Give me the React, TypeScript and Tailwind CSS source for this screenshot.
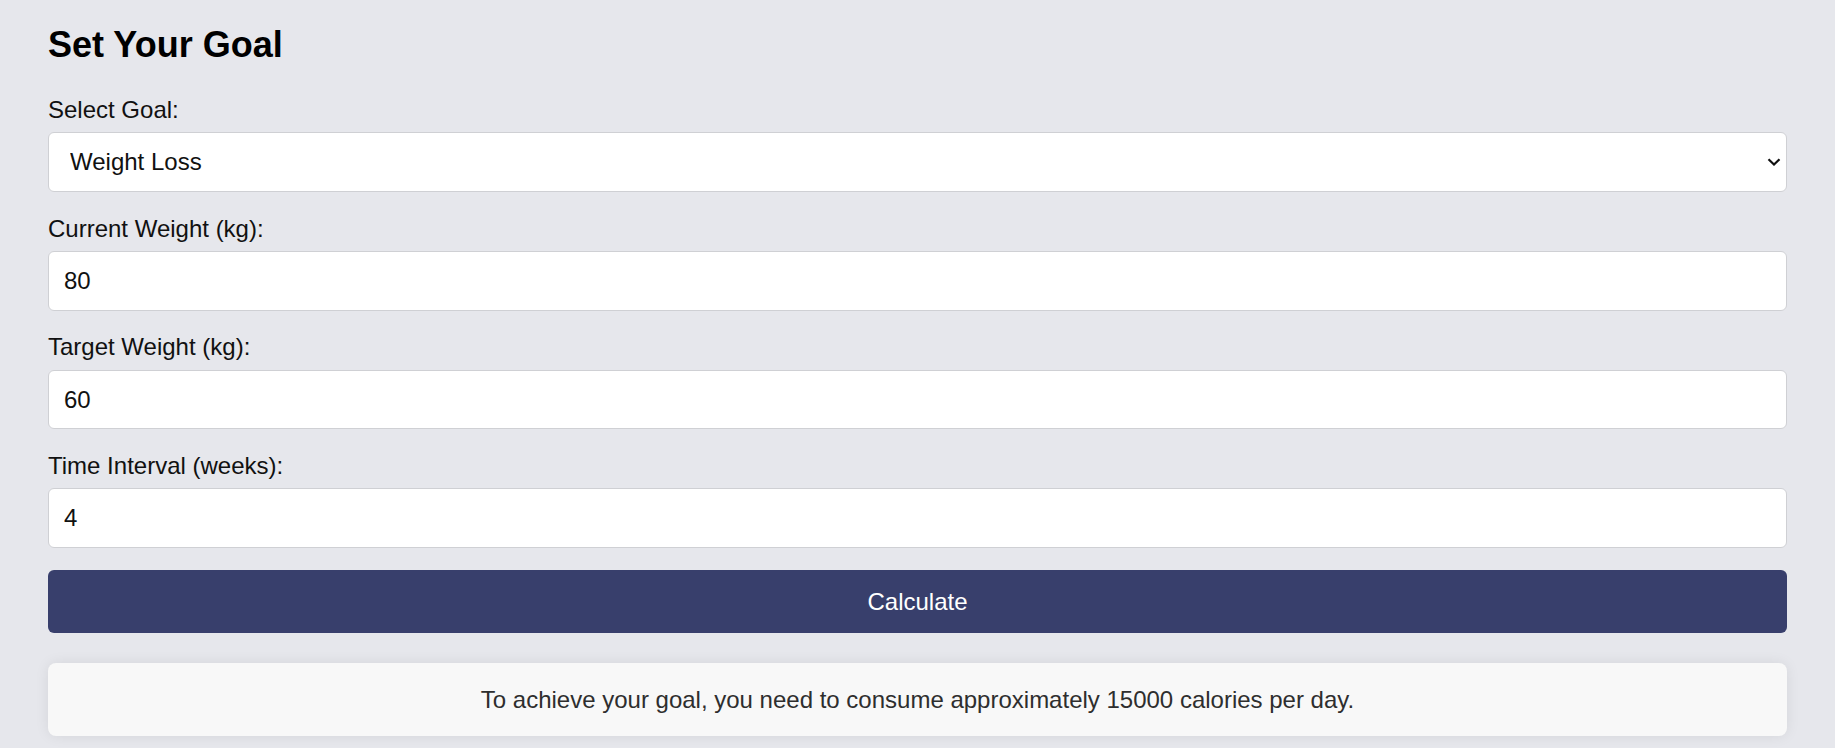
import React, { useState } from "react";

const font = { fontFamily: '"Liberation Sans", Arial, sans-serif' };

function Field({
  label,
  value,
  last,
}: {
  label: string;
  value: string;
  last?: boolean;
}) {
  const [v, setV] = useState(value);
  return (
    <div className={last ? "" : "mb-[23.7px]"}>
      <label className="block text-[24px] leading-[26px] text-[#111] mb-[9.4px]">{label}</label>
      <input
        type="number"
        value={v}
        onChange={(e) => setV(e.target.value)}
        className="block w-full h-[59.4px] bg-white border border-[#cfd0d4] rounded-[6px] pl-[15px] text-[24px] text-[#111] outline-none"
        style={font}
      />
    </div>
  );
}

export default function App() {
  const [goal, setGoal] = useState("loss");
  return (
    <div className="min-h-screen bg-[#e6e7ec] px-[48px] pt-[25px] pb-[12px]" style={font}>
      <h2 className="text-[36px] leading-[39px] font-bold text-black mb-[32.9px]">Set Your Goal</h2>

      <div className="mb-[23.7px]">
        <label className="block text-[24px] leading-[26px] text-[#111] mb-[9.4px]">Select Goal:</label>
        <div className="relative">
          <select
            value={goal}
            onChange={(e) => setGoal(e.target.value)}
            className="block w-full h-[60px] appearance-none bg-white border border-[#cfd0d4] rounded-[6px] pl-[21px] text-[24px] text-[#111] outline-none"
            style={font}
          >
            <option value="loss">Weight Loss</option>
            <option value="gain">Weight Gain</option>
            <option value="maintain">Maintain Weight</option>
          </select>
          <svg
            className="absolute right-[6px] top-[26px] pointer-events-none"
            width="14"
            height="8"
            viewBox="0 0 14 8"
            fill="none"
          >
            <path d="M1.5 1.2 L7 6.5 L12.5 1.2" stroke="#111" strokeWidth="2.2" />
          </svg>
        </div>
      </div>

      <Field label="Current Weight (kg):" value="80" />
      <Field label="Target Weight (kg):" value="60" />
      <Field label="Time Interval (weeks):" value="4" last />

      <button
        className="mt-[22px] block w-full h-[63.7px] bg-[#383f6c] text-white text-[24px] rounded-[6px]"
        style={font}
      >
        Calculate
      </button>

      <div className="mt-[30px] h-[73px] flex items-center justify-center bg-[#f8f8f8] rounded-[8px] shadow-[0_0_14px_rgba(0,0,0,0.08)] text-[24px] text-[#2e2e2e]">
        To achieve your goal, you need to consume approximately 15000 calories per day.
      </div>
    </div>
  );
}
